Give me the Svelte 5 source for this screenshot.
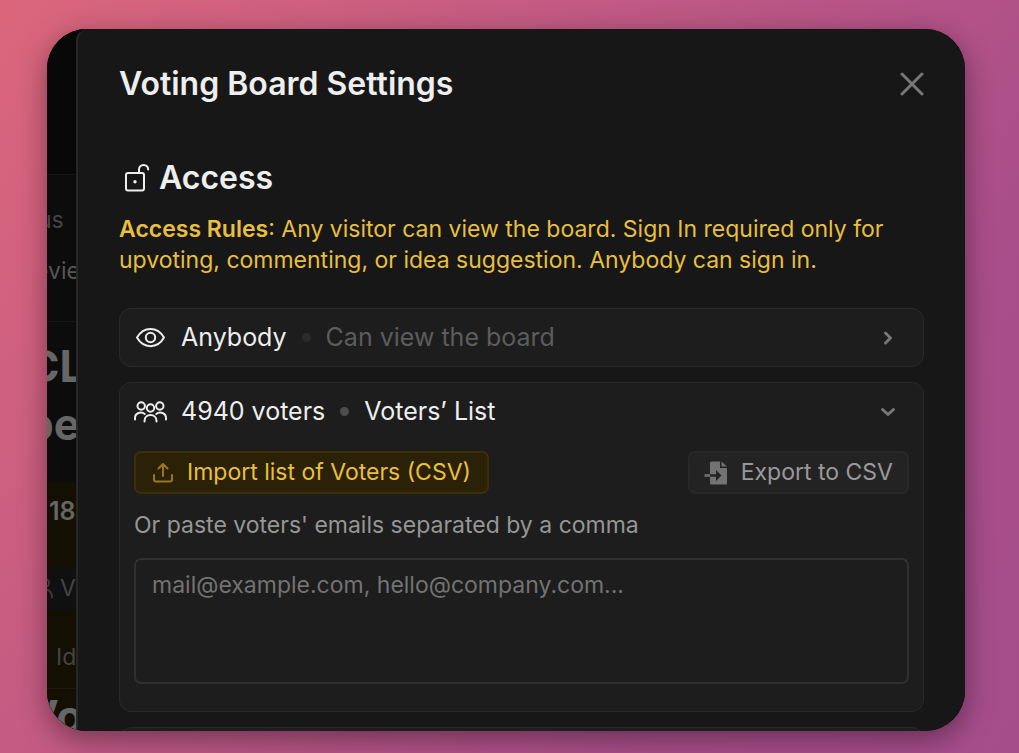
<script>
  let emails = $state('');
</script>

<main>
  <div class="window">
    <aside class="board" aria-hidden="true">
      <div class="top"></div>
      <div class="nav"><span class="status">us</span><span class="review">evie</span></div>
      <div class="heading"><span class="first">CL</span><span class="second">pe</span></div>
      <div class="count">18</div>
      <div class="voters">
        <svg width="28" height="28" viewBox="0 0 28 28"><circle cx="18" cy="10" r="4" /><path d="M17 17.500c5-2 8 2 8 7" /></svg>
        <span>Vo</span>
      </div>
      <div class="ideas">Ide</div>
      <div class="last">Vo</div>
    </aside>

    <section class="panel">
      <header>
        <h1>Voting Board Settings</h1>
        <button class="close" aria-label="Close">
          <svg width="24" height="24" viewBox="0 0 24 24"><path d="M2 2l20 20M22 2L2 22" /></svg>
        </button>
      </header>

      <h2>
        <svg width="26" height="30" viewBox="0 0 26 30"><rect x="2" y="10" width="18" height="17.500" rx="2" /><path d="M15 10V6.500a4.600 4.600 0 0 1 9.200 0" /><circle class="fill" cx="11" cy="18.700" r="1.700" /></svg>
        Access
      </h2>
      <p class="rules"><strong>Access Rules</strong>: Any visitor can view the board. Sign In required only for upvoting, commenting, or idea suggestion. Anybody can sign in.</p>

      <div class="cards">
        <div class="card">
          <button class="row" aria-expanded="false">
            <svg class="lead" width="34" height="24" viewBox="0 0 34 24"><path d="M3 11.500C9.500 0 23.500 0 30 11.500C23.500 23 9.500 23 3 11.500Z" /><circle cx="16.500" cy="11.500" r="4.700" /></svg>
            <span>Anybody</span><i class="dot dim"></i><span class="muted">Can view the board</span>
            <svg class="chevron" width="16" height="16" viewBox="0 0 16 16"><path d="M5.500 3l5 5-5 5" /></svg>
          </button>
        </div>

        <div class="card open">
          <button class="row" aria-expanded="true">
            <svg class="lead group" width="34" height="24" viewBox="0 0 34 24"><circle cx="7.200" cy="6" r="3.700" /><circle cx="25.800" cy="6" r="3.700" /><circle cx="16.500" cy="8" r="3.700" /><path d="M1 19.500v-1.500c0-5 6-7 9.800-4M32 19.500v-1.500c0-5-6-7-9.800-4M10.500 21.500v-.500c0-8 12-8 12 0v.500" /></svg>
            <span>4940 voters</span><i class="dot"></i><span>Voters’ List</span>
            <svg class="chevron" width="16" height="16" viewBox="0 0 16 16"><path d="M2.500 5.500l5.500 5 5.500-5" /></svg>
          </button>
          <div class="content">
            <div class="actions">
              <button class="import">
                <svg width="22" height="22" viewBox="0 0 22 22"><path d="M2 13v4.500q0 2 2 2h14q2 0 2-2V13M11 14V2M6.500 6.500L11 2l4.500 4.500" /></svg>
                Import list of Voters (CSV)
              </button>
              <button class="export">
                <svg width="24" height="24" viewBox="0 0 24 24"><path class="fill" d="M6 2Q6 .500 7.500.500H16V7H23V23.500H7.500Q6 23.500 6 22ZM17.500.500L23 5.500H17.500ZM.500 13.200H6V15.800H.500Z" /><path class="arrow" d="M6 13.200H12V9L17.500 14.500L12 20V15.800H6Z" /></svg>
                Export to CSV
              </button>
            </div>
            <label for="emails">Or paste voters' emails separated by a comma</label>
            <textarea id="emails" bind:value={emails} placeholder="mail@example.com, hello@company.com..."></textarea>
          </div>
        </div>
        <div class="card next"></div>
      </div>
    </section>
  </div>
</main>

<style>
  :global(body) { margin: 0; }
  main, main * { box-sizing: border-box; }
  main {
    height: 100vh;
    padding: 29px 54px 22px 47px;
    background: linear-gradient(125deg, #db667c 0%, #aa4e8a 75%, #a44d8b 100%);
    font-family: Inter, sans-serif;
    font-size: 23px;
    line-height: 31px;
    color: #eee;
  }
  .window {
    display: flex;
    height: 100%;
    overflow: hidden;
    border-radius: 40px;
    background: #0a0a0a;
    box-shadow: 0 8px 28px rgb(0 0 0 / 40%);
  }
  .board {
    flex: 0 0 37px;
    margin-right: -8px;
    overflow: hidden;
    color: #555;
    white-space: nowrap;
    background: #0c0c0c;
  }
  .board > div { overflow: hidden; }
  .board span { display: block; }
  .top { height: 146px; background: #080808; border-bottom: 1px solid #161616; }
  .nav { height: 147px; padding-top: 30px; border-bottom: 1px solid #161616; color: #444; }
  .status { margin-left: -9px; }
  .review { margin: 20px 0 0 -12px; color: #555; }
  .heading { height: 160px; padding-top: 15px; font-size: 44px; line-height: 58px; font-weight: 700; color: #666; }
  .first { margin-left: -20px; }
  .second { margin-left: -21px; }
  .count { height: 85px; padding: 14px 0 0 2px; background: #131003; font-size: 25px; font-weight: 600; color: #666; }
  .voters { display: flex; height: 44px; padding-top: 6px; background: #101010; color: #444; }
  .voters svg { flex: none; margin-left: -20px; stroke: #3a3a3a; }
  .voters span { margin-left: 5px; }
  .ideas { height: 78px; padding: 31px 0 0 9px; background: #131003; border-bottom: 1px solid #1e190b; color: #444; }
  .last { height: 60px; background: #131003; font-size: 44px; line-height: 54px; font-weight: 700; color: #666; text-indent: -21px; }
  .panel {
    flex: 1;
    min-width: 0;
    padding: 34px 41px 0;
    overflow: hidden;
    border-left: 2px solid #272727;
    border-radius: 12px 0 0 0;
    background: #171717;
  }
  header { display: flex; align-items: center; justify-content: space-between; }
  h1, h2 { margin: 0; font-size: 32px; line-height: 42px; font-weight: 600; }
  h2 { display: flex; align-items: center; gap: 9px; margin-top: 52px; padding-left: 5px; }
  button { font: inherit; color: inherit; cursor: pointer; }
  svg { fill: none; stroke: currentColor; stroke-width: 2; stroke-linecap: round; stroke-linejoin: round; }
  .fill { fill: currentColor; stroke: none; }
  .arrow { fill: #232323; stroke: none; }
  .close { display: grid; padding: 0; border: 0; background: none; color: #777; }
  .close svg { stroke-width: 3; }
  .rules { margin: 15px 0 0; color: #e8bf3e; }
  strong { font-weight: 600; }
  .cards { display: grid; gap: 15px; margin-top: 32px; }
  .card { border: 1px solid #292929; border-radius: 12px; background: #1d1d1d; }
  .row { display: flex; align-items: center; width: 100%; height: 57px; padding: 0 27px 0 14px; border: 0; background: none; font-size: 25px; text-align: left; }
  .lead { margin-right: 13px; }
  .dot { width: 9px; height: 9px; margin: 0 15px; border-radius: 50%; background: #4c4c4c; }
  .dot.dim { background: #2b2b2b; }
  .muted { color: #5c5c5c; }
  .chevron { margin-left: auto; color: #777; stroke-width: 3; }
  .content { padding: 11px 14px 27px; }
  .actions { display: flex; justify-content: space-between; margin-bottom: 16px; }
  .actions button { display: flex; align-items: center; gap: 13px; height: 43px; padding: 0 14px; border: 2px solid #282828; border-radius: 7px; background: #232323; color: #999; white-space: nowrap; }
  .actions .import { padding: 0 16px; border-color: #3d2e08; background: #2b2106; color: #e8bf3e; }
  .import svg { color: #97771f; }
  .export svg { color: #737373; }
  label { display: block; color: #969696; }
  textarea { display: block; width: 100%; height: 126px; margin-top: 17px; padding: 10px 16px; border: 2px solid #303030; border-radius: 7px; outline: 0; resize: none; background: #1d1d1d; color: #ddd; font: inherit; }
  textarea::placeholder { color: #737373; opacity: 1; }
  .next { height: 59px; }
</style>
